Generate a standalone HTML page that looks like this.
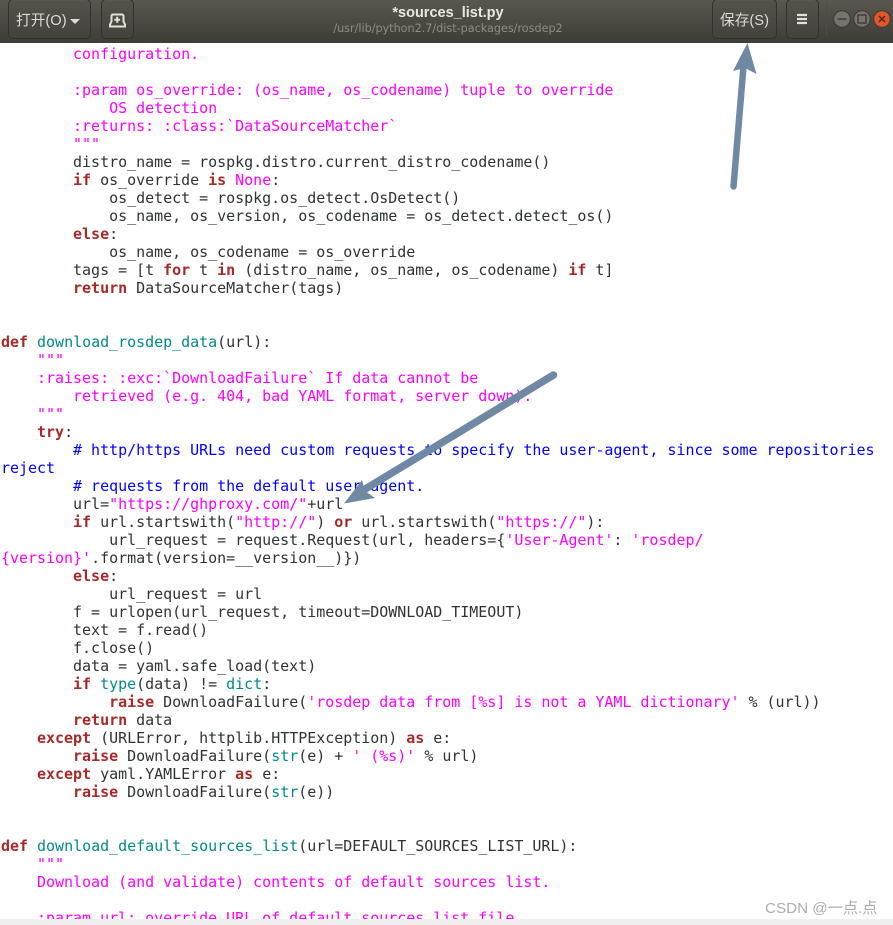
<!DOCTYPE html>
<html lang="zh">
<head>
<meta charset="utf-8">
<title>sources_list.py</title>
<style>
html,body{margin:0;padding:0;background:#fff;}
body{width:893px;height:925px;position:relative;overflow:hidden;}
#hdr{position:absolute;left:0;top:0;width:893px;height:43px;background:linear-gradient(#5a574f,#3e3c36);}
.btn{position:absolute;top:-1px;height:40px;box-sizing:border-box;border:1px solid #33312c;border-radius:5px;background:linear-gradient(#55524b,#44423c);box-shadow:inset 0 1px 0 rgba(255,255,255,.03);color:#dfdbd2;font:14.7px "Liberation Sans","Noto Sans CJK SC",sans-serif;line-height:43px;white-space:nowrap;}
.t{position:absolute;white-space:nowrap;text-align:center;}
#code{position:absolute;left:1px;top:0;width:892px;height:919px;overflow:hidden;font:15px/18px "DejaVu Sans Mono",monospace;letter-spacing:-0.025px;color:#2e3436;}
.l{position:absolute;left:0;white-space:pre;height:18px;}
.k{color:#a52a2a;font-weight:bold;}
.s{color:#ff00ff;}
.c{color:#0000ff;}
.f{color:#008a8c;}
#foot{position:absolute;left:0;top:919px;width:893px;height:6px;background:#f0f0f0;}
#wm{position:absolute;left:765px;top:900px;font:15.2px "Liberation Sans","Noto Sans CJK SC",sans-serif;color:#ababab;white-space:nowrap;line-height:18px;}
svg{position:absolute;left:0;top:0;}
</style>
</head>
<body>
<div id="code">
<div class="l s" style="top:45px">        configuration.</div>
<div class="l s" style="top:81px">        :param os_override: (os_name, os_codename) tuple to override</div>
<div class="l s" style="top:99px">            OS detection</div>
<div class="l s" style="top:117px">        :returns: :class:`DataSourceMatcher`</div>
<div class="l s" style="top:135px">        """</div>
<div class="l" style="top:153px">        distro_name = rospkg.distro.current_distro_codename()</div>
<div class="l" style="top:171px">        <span class="k">if</span> os_override <span class="k">is</span> <span class="s">None</span>:</div>
<div class="l" style="top:189px">            os_detect = rospkg.os_detect.OsDetect()</div>
<div class="l" style="top:207px">            os_name, os_version, os_codename = os_detect.detect_os()</div>
<div class="l" style="top:225px">        <span class="k">else</span>:</div>
<div class="l" style="top:243px">            os_name, os_codename = os_override</div>
<div class="l" style="top:261px">        tags = [t <span class="k">for</span> t <span class="k">in</span> (distro_name, os_name, os_codename) <span class="k">if</span> t]</div>
<div class="l" style="top:279px">        <span class="k">return</span> DataSourceMatcher(tags)</div>
<div class="l" style="top:333px"><span class="k">def</span> <span class="f">download_rosdep_data</span>(url):</div>
<div class="l s" style="top:351px">    """</div>
<div class="l s" style="top:369px">    :raises: :exc:`DownloadFailure` If data cannot be</div>
<div class="l s" style="top:387px">        retrieved (e.g. 404, bad YAML format, server down).</div>
<div class="l s" style="top:405px">    """</div>
<div class="l" style="top:423px">    <span class="k">try</span>:</div>
<div class="l c" style="top:441px">        # http/https URLs need custom requests to specify the user-agent, since some repositories</div>
<div class="l c" style="top:459px">reject</div>
<div class="l c" style="top:477px">        # requests from the default user-agent.</div>
<div class="l" style="top:495px">        url=<span class="s">"https://ghproxy.com/"</span>+url</div>
<div class="l" style="top:513px">        <span class="k">if</span> url.startswith(<span class="s">"http://"</span>) <span class="k">or</span> url.startswith(<span class="s">"https://"</span>):</div>
<div class="l" style="top:531px">            url_request = request.Request(url, headers={<span class="s">'User-Agent'</span>: <span class="s">'rosdep/</span></div>
<div class="l" style="top:549px"><span class="s">{version}'</span>.format(version=__version__)})</div>
<div class="l" style="top:567px">        <span class="k">else</span>:</div>
<div class="l" style="top:585px">            url_request = url</div>
<div class="l" style="top:603px">        f = urlopen(url_request, timeout=DOWNLOAD_TIMEOUT)</div>
<div class="l" style="top:621px">        text = f.read()</div>
<div class="l" style="top:639px">        f.close()</div>
<div class="l" style="top:657px">        data = yaml.safe_load(text)</div>
<div class="l" style="top:675px">        <span class="k">if</span> <span class="f">type</span>(data) != <span class="f">dict</span>:</div>
<div class="l" style="top:693px">            <span class="k">raise</span> DownloadFailure(<span class="s">'rosdep data from [%s] is not a YAML dictionary'</span> % (url))</div>
<div class="l" style="top:711px">        <span class="k">return</span> data</div>
<div class="l" style="top:729px">    <span class="k">except</span> (URLError, httplib.HTTPException) <span class="k">as</span> e:</div>
<div class="l" style="top:747px">        <span class="k">raise</span> DownloadFailure(<span class="f">str</span>(e) + <span class="s">' (%s)'</span> % url)</div>
<div class="l" style="top:765px">    <span class="k">except</span> yaml.YAMLError <span class="k">as</span> e:</div>
<div class="l" style="top:783px">        <span class="k">raise</span> DownloadFailure(<span class="f">str</span>(e))</div>
<div class="l" style="top:837px"><span class="k">def</span> <span class="f">download_default_sources_list</span>(url=DEFAULT_SOURCES_LIST_URL):</div>
<div class="l s" style="top:855px">    """</div>
<div class="l s" style="top:873px">    Download (and validate) contents of default sources list.</div>
<div class="l s" style="top:909px">    :param url: override URL of default sources list file</div>
</div>
<div id="foot"></div>
<div id="wm">CSDN @一点.点</div>

<div id="hdr">
  <div class="btn" style="left:8px;width:83px;padding-left:7px;">打开(O)</div>
  <div style="position:absolute;left:70px;top:19px;width:0;height:0;border-left:5px solid transparent;border-right:5px solid transparent;border-top:5px solid #dfdbd2;"></div>
  <div class="btn" style="left:101px;width:33px;"></div>
  <div class="btn" style="left:712px;width:65px;text-align:center;">保存(S)</div>
  <div class="btn" style="left:786px;width:33px;"></div>
  <div style="position:absolute;left:826px;top:3px;width:1px;height:33px;background:#4f4c46;"></div>
  <div class="t" style="left:298px;width:300px;top:4px;font:bold 14.5px/18px 'Liberation Sans',sans-serif;color:#ebe8e1;">*sources_list.py</div>
  <div class="t" style="left:298px;width:300px;top:21px;font:11.2px/16px 'DejaVu Sans',sans-serif;color:#8f8c84;">/usr/lib/python2.7/dist-packages/rosdep2</div>
</div>

<svg width="893" height="925" viewBox="0 0 893 925" xmlns="http://www.w3.org/2000/svg">
  <!-- new-tab icon -->
  <path d="M112.500 14.500h9.500a1.500 1.500 0 0 1 1.500 1.500v5.500l1.500 3v2h-15v-2l1.500-3v-5.500a1.500 1.500 0 0 1 1.500-1.500z" fill="none" stroke="#e4e0d8" stroke-width="2"/>
  <path d="M117.200 16.800v6M114.300 19.800h5.800" stroke="#e4e0d8" stroke-width="2" fill="none"/>
  <!-- hamburger -->
  <path d="M797 15h10M797 19h10M797 23h10" stroke="#e4e0d8" stroke-width="2.200" fill="none"/>
  <!-- window buttons -->
  <circle cx="842" cy="19" r="8.300" fill="#77746d" stroke="#3a3833"/>
  <path d="M837.500 19h9" stroke="#3d3b36" stroke-width="1.400"/>
  <circle cx="862" cy="19" r="8.300" fill="#77746d" stroke="#3a3833"/>
  <rect x="858" y="15" width="8" height="8" fill="none" stroke="#3d3b36" stroke-width="1.400"/>
  <circle cx="882" cy="19" r="8.300" fill="#e2572a" stroke="#3a3833"/>
  <path d="M879 16l6 6M885 16l-6 6" stroke="#4a2415" stroke-width="1.400"/>
  <!-- arrows -->
  <g fill="#6f88a3" stroke="none">
    <path d="M733.500 186.500L744 60" stroke="#6f88a3" stroke-width="6.500" stroke-linecap="round" fill="none"/>
    <path d="M747.500 43L756.500 74L745 68L733 71Z"/>
    <path d="M553.500 375L362 491" stroke="#6f88a3" stroke-width="7.500" stroke-linecap="round" fill="none"/>
    <path d="M344 503.500L362 480L365 491L375 498Z"/>
  </g>
</svg>
</body>
</html>
